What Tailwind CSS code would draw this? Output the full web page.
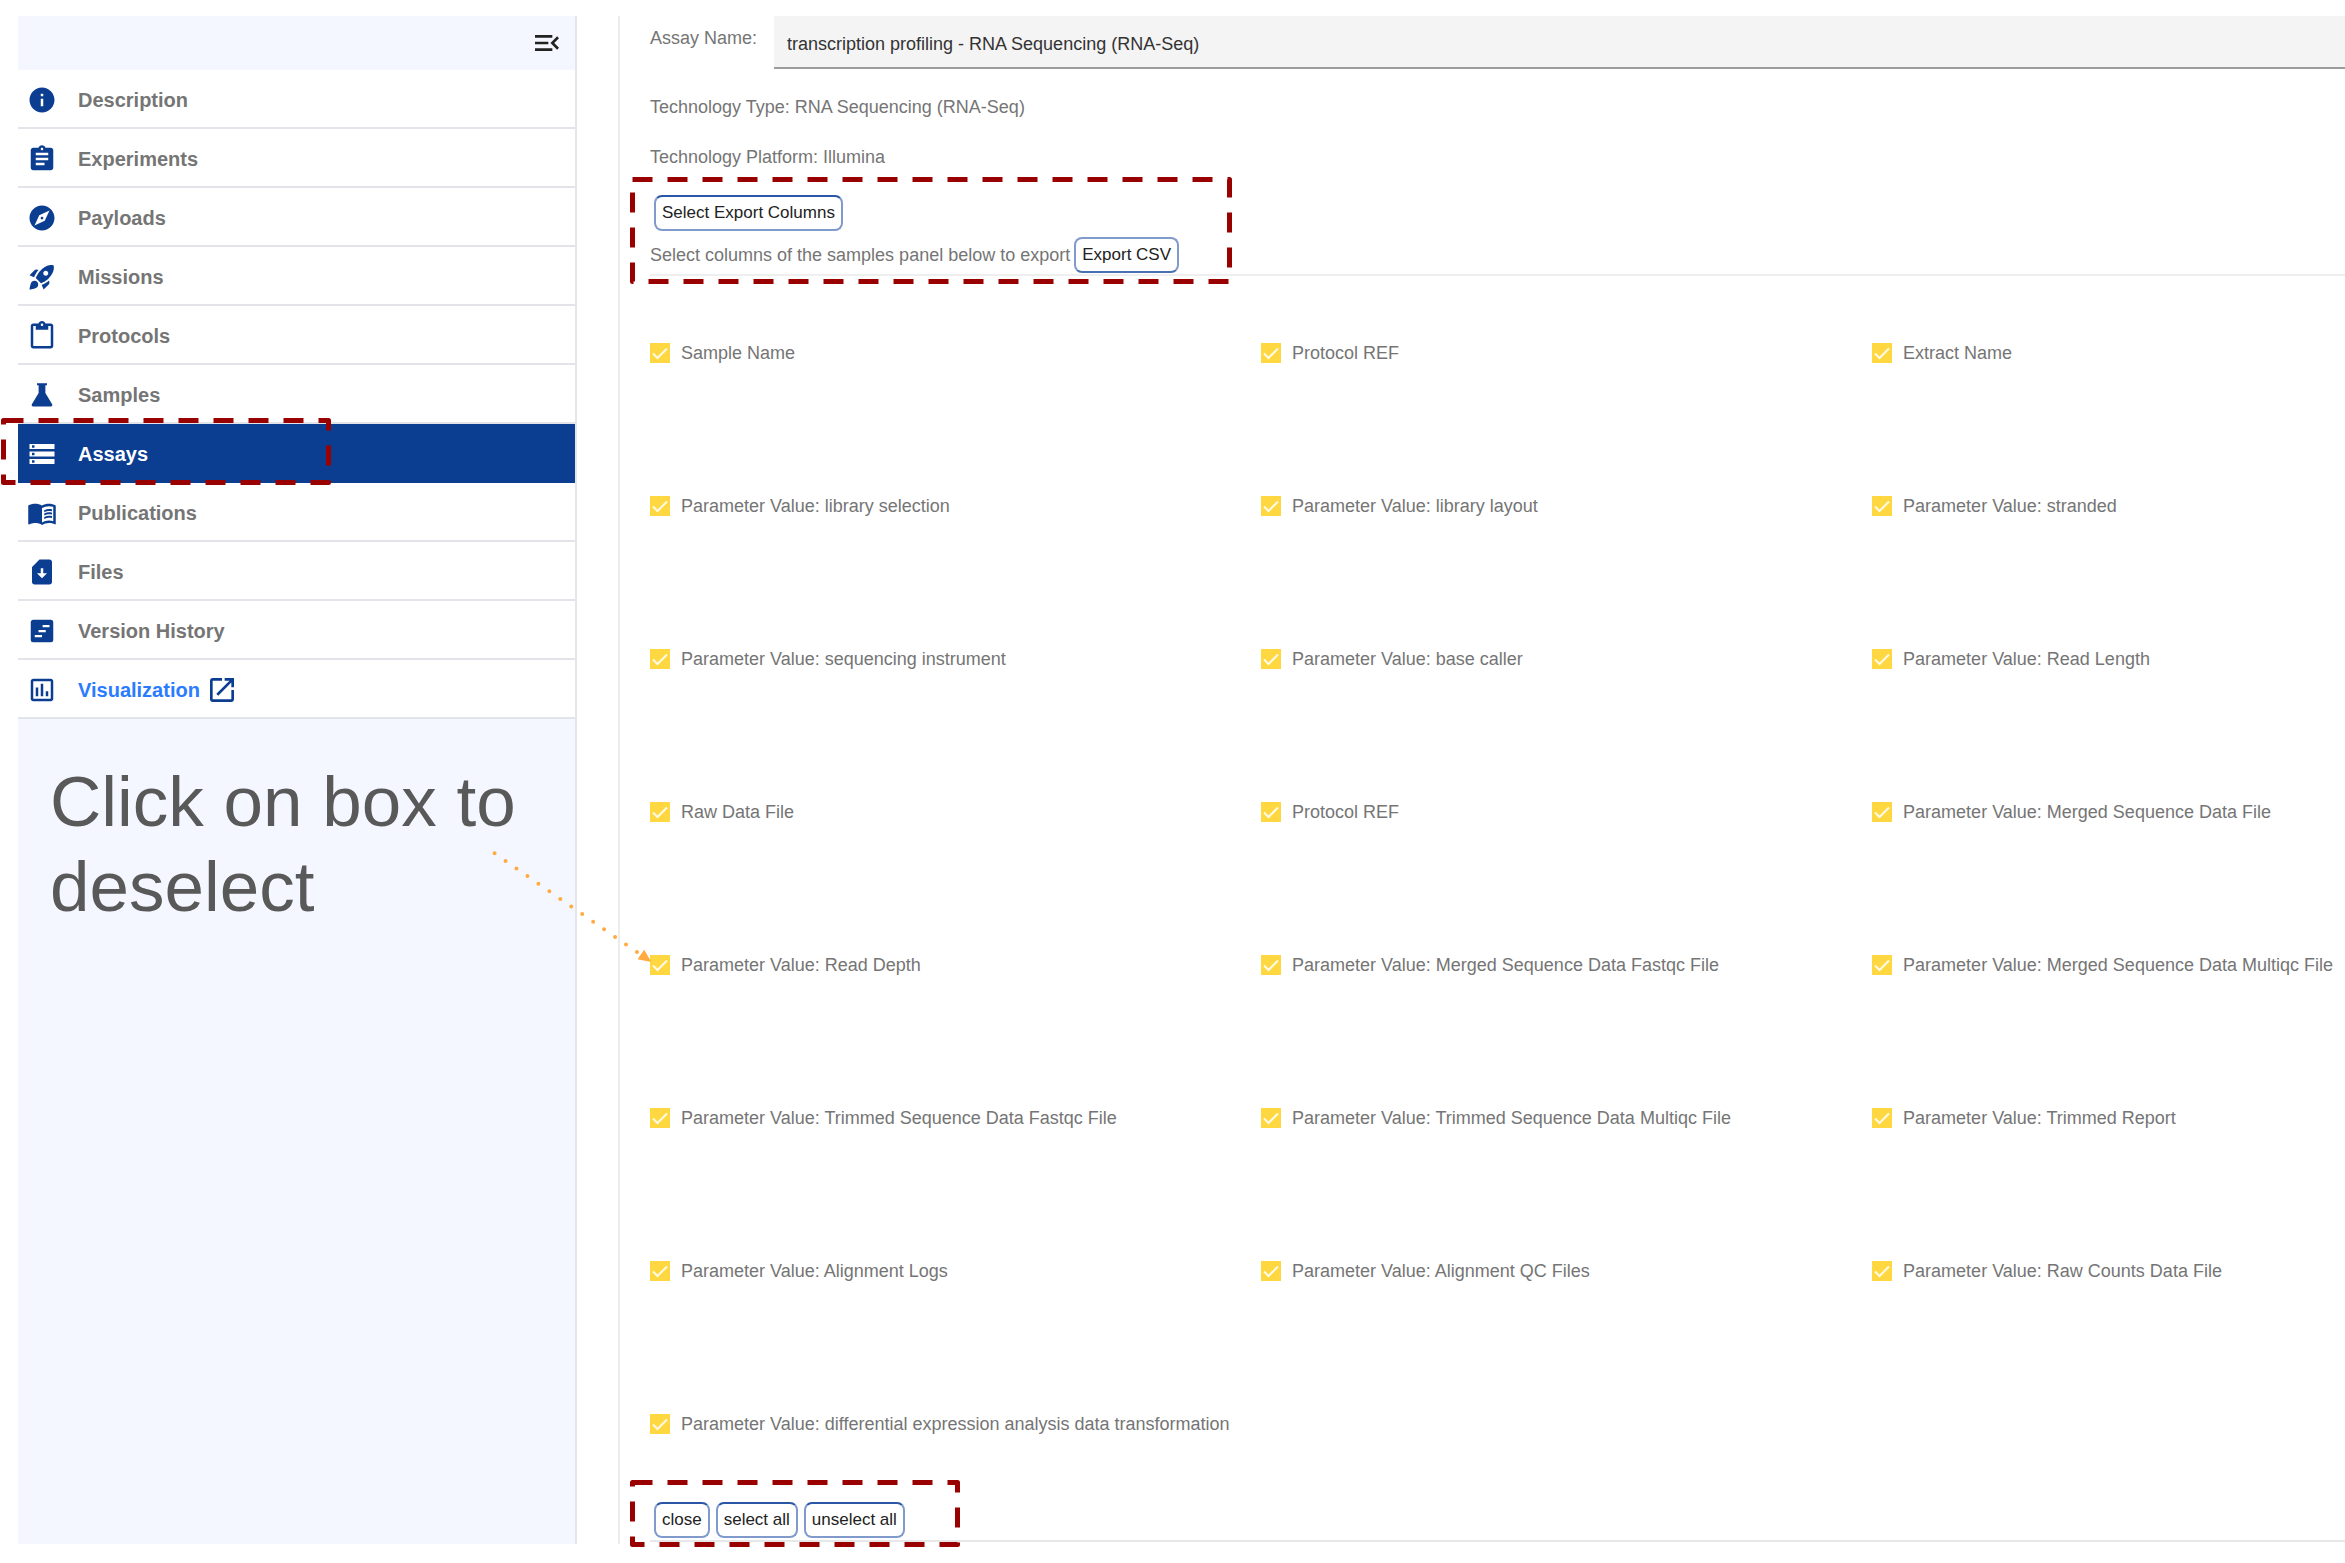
<!DOCTYPE html>
<html lang="en">
<head>
<meta charset="utf-8">
<meta name="viewport" content="width=device-width, initial-scale=1">
<title>Assays - Export Columns</title>
<script src="https://cdn.jsdelivr.net/npm/@tailwindcss/browser@4"></script>
</head>
<body class="bg-white font-['Liberation_Sans',Arial,sans-serif] text-[#757575]">
<svg class="hidden" aria-hidden="true">
  <symbol id="tick" viewBox="0 0 20 20"><path d="M3 10.500 7.500 15 17 5.500" fill="none" stroke="#fffbe6" stroke-width="2"/></symbol>
</svg>
<div class="relative flex min-h-screen overflow-hidden pt-4 pb-[19px] pl-[18px]">

  <!-- Study navigation -->
  <aside class="flex w-[559px] shrink-0 flex-col border-r-2 border-[#e4e6ec] bg-[#f4f7ff]">
    <div class="flex h-[54px] items-center justify-end pr-[12px]">
      <button type="button" aria-label="Collapse menu" class="text-[#222]">
        <svg class="size-8" viewBox="0 0 24 24" fill="currentColor"><path d="M3 18h13v-2H3v2zm0-5h10v-2H3v2zm0-7v2h13V6H3zm18 9.590L17.420 12 21 8.410 19.590 7l-5 5 5 5L21 15.590z"/></svg>
      </button>
    </div>
    <nav class="flex flex-col text-xl font-bold [&>a]:flex [&>a]:h-[59px] [&>a]:items-center [&>a]:gap-[21px] [&>a]:border-b-2 [&>a]:border-[#e2e4ea] [&>a]:bg-white [&>a]:pt-0.5 [&>a]:pl-[9px] [&_svg]:size-[30px] [&_svg]:fill-[#0b3d91]">
      <a href="#description"><svg viewBox="0 0 24 24"><path d="M12 2C6.480 2 2 6.480 2 12s4.480 10 10 10 10-4.480 10-10S17.520 2 12 2zm1 15h-2v-6h2v6zm0-8h-2V7h2v2z"/></svg>Description</a>
      <a href="#experiments"><svg viewBox="0 0 24 24"><path d="M19 3h-4.180C14.400 1.840 13.300 1 12 1c-1.300 0-2.400.84-2.820 2H5c-1.100 0-2 .9-2 2v14c0 1.100.9 2 2 2h14c1.100 0 2-.9 2-2V5c0-1.100-.9-2-2-2zm-7 0c.55 0 1 .45 1 1s-.45 1-1 1-1-.45-1-1 .45-1 1-1zm2 14H7v-2h7v2zm3-4H7v-2h10v2zm0-4H7V7h10v2z"/></svg>Experiments</a>
      <a href="#payloads"><svg viewBox="0 0 24 24"><path d="M12 10.900c-.61 0-1.100.49-1.100 1.100s.49 1.100 1.100 1.100c.61 0 1.100-.49 1.100-1.100s-.49-1.100-1.100-1.100zM12 2C6.480 2 2 6.480 2 12s4.480 10 10 10 10-4.480 10-10S17.520 2 12 2zm2.190 12.190L6 18l3.810-8.190L18 6l-3.810 8.190z"/></svg>Payloads</a>
      <a href="#missions"><svg viewBox="0 0 24 24"><path d="M9.190 6.350c-2.040 2.290-3.440 5.580-3.570 5.890L2 10.690l4.050-4.050c.47-.47 1.150-.68 1.810-.55l1.330.26zM11.170 17s3.740-1.550 5.890-3.700c5.400-5.400 4.500-9.620 4.210-10.570-.95-.3-5.170-1.190-10.570 4.210C8.550 9.090 7 12.830 7 12.830L11.170 17zm6.480-2.190c-2.290 2.040-5.580 3.440-5.890 3.570L13.310 22l4.050-4.050c.47-.47.68-1.150.55-1.810l-.26-1.330zM9 18c0 .83-.34 1.580-.88 2.120C6.940 21.300 2 22 2 22s.7-4.940 1.880-6.120C4.420 15.340 5.170 15 6 15c1.660 0 3 1.340 3 3zm4-9c0-1.100.9-2 2-2s2 .9 2 2-.9 2-2 2-2-.9-2-2z"/></svg>Missions</a>
      <a href="#protocols"><svg viewBox="0 0 24 24"><path d="M19 2h-4.180C14.400.840 13.300 0 12 0c-1.300 0-2.400.840-2.820 2H5c-1.100 0-2 .9-2 2v16c0 1.100.9 2 2 2h14c1.100 0 2-.9 2-2V4c0-1.100-.9-2-2-2zm-7 0c.55 0 1 .45 1 1s-.45 1-1 1-1-.45-1-1 .45-1 1-1zm7 18H5V4h2v3h10V4h2v16z"/></svg>Protocols</a>
      <a href="#samples"><svg viewBox="0 0 24 24"><path d="M8 2.600h8v1.500h-1.300v6.200L20 19.200c.6 1 .2 2-1 2H5c-1.200 0-1.600-1-1-2l5.300-8.900V4.100H8z"/></svg>Samples</a>
      <a href="#assays" aria-current="page" class="border-[#0b3d91]! bg-[#0b3d91]! text-white"><svg class="fill-white!" viewBox="0 0 24 24"><path d="M2 20h20v-4H2v4zm2-3h2v2H4v-2zM2 4v4h20V4H2zm4 3H4V5h2v2zm-4 7h20v-4H2v4zm2-3h2v2H4v-2z"/></svg>Assays</a>
      <a href="#publications"><svg viewBox="0 0 24 24"><path d="M17.500 4.500c-1.950 0-4.050.4-5.500 1.500-1.450-1.100-3.550-1.500-5.500-1.500S2.450 4.900 1 6v14.650c0 .65.730.45.750.45C3.100 20.450 5.050 20 6.500 20c1.950 0 4.050.4 5.500 1.500 1.350-.85 3.800-1.500 5.500-1.500 1.650 0 3.350.3 4.750 1.050.41.210.75-.19.750-.45V6c-1.490-1.120-3.630-1.500-5.500-1.500zm3.500 14c-1.100-.35-2.300-.5-3.500-.5-1.700 0-4.150.65-5.500 1.500V8c1.350-.85 3.800-1.500 5.500-1.500 1.200 0 2.400.15 3.500.5v11.500z"/><path d="M13.800 9.700c1.900-1 4.100-1.200 6.200-.7v1.500c-2.100-.4-4.400-.2-6.200.8zM13.800 12.400c1.900-1 4.100-1.200 6.200-.7v1.500c-2.100-.4-4.400-.2-6.200.8zM13.800 15.100c1.900-1 4.100-1.200 6.200-.7v1.500c-2.100-.4-4.400-.2-6.200.8z"/></svg>Publications</a>
      <a href="#files"><svg viewBox="0 0 24 24"><path d="M18 2h-8L4 8v12c0 1.100.9 2 2 2h12c1.100 0 2-.9 2-2V4c0-1.100-.9-2-2-2zm-6 15l-4-4h3V9.020L13 9v4h3l-4 4z"/></svg>Files</a>
      <a href="#history"><svg viewBox="0 0 24 24"><path fill-rule="evenodd" d="M5 3h14a2 2 0 0 1 2 2v14a2 2 0 0 1-2 2H5a2 2 0 0 1-2-2V5c0-1.100.9-2 2-2zM12.500 7.200v1.700H18V7.200zM9.200 11.200v1.700H15v-1.700zM6.200 15.200v1.700H12v-1.700z"/></svg>Version History</a>
      <a href="#visualization" class="text-[#2b7bff]"><svg viewBox="0 0 24 24"><path d="M9 17H7v-7h2v7zm4 0h-2V7h2v10zm4 0h-2v-4h2v4zm2 2H5V5h14v14zm0-16H5c-1.100 0-2 .9-2 2v14c0 1.100.9 2 2 2h14c1.100 0 2-.9 2-2V5c0-1.100-.9-2-2-2z"/></svg><span class="flex items-center gap-1.5">Visualization<svg class="size-8!" viewBox="0 0 24 24"><path d="M19 19H5V5h7V3H5c-1.110 0-2 .9-2 2v14c0 1.100.89 2 2 2h14c1.100 0 2-.9 2-2v-7h-2v7zM14 3v2h3.590l-9.830 9.830 1.410 1.410L19 6.410V10h2V3h-7z"/></svg></span></a>
    </nav>
    <p class="mt-10 pl-8 text-[71px] leading-[85px] text-[#595959]">Click on box to<br>deselect</p>
  </aside>

  <!-- Assay panel -->
  <main class="ml-[41px] flex min-w-0 flex-1 flex-col border-l-2 border-[#ececec] pl-[30px] text-lg leading-5">
    <div class="flex h-[53px] items-start">
      <label for="assay" class="w-[124px] shrink-0 pt-3">Assay Name:</label>
      <select id="assay" class="h-full min-w-0 flex-1 appearance-none rounded-none border-b-2 border-[#9c9c9c] bg-[#f4f4f4] pt-1 pl-[13px] text-[#333] outline-none">
        <option>transcription profiling - RNA Sequencing (RNA-Seq)</option>
      </select>
    </div>
    <p class="mt-7">Technology Type: RNA Sequencing (RNA-Seq)</p>
    <p class="mt-[30px]">Technology Platform: Illumina</p>
    <div class="mt-7 flex pl-1">
      <button type="button" class="h-9 rounded-lg border-2 border-[#7f9acb] border-t-[#2a56a5] bg-white px-1.5 text-[17px] text-[#222]">Select Export Columns</button>
    </div>
    <div class="mt-1.5 flex h-[39px] items-start gap-1 border-b-2 border-[#efefef]">
      <span class="pt-2">Select columns of the samples panel below to export</span>
      <button type="button" class="h-9 rounded-lg border-2 border-[#7f9acb] border-b-[#4a70b4] bg-white px-1.5 text-[17px] text-[#222]">Export CSV</button>
    </div>

    <div class="grid auto-rows-[153px] grid-cols-[721fr_721fr_558fr] [&_input]:size-5 [&_input]:appearance-none [&_input]:bg-[#ffd740] [&_input]:[grid-area:1/1] [&_label]:flex [&_label]:items-center [&_label]:gap-[11px] [&_label]:whitespace-nowrap [&_label>span]:grid [&_svg]:pointer-events-none [&_svg]:size-5 [&_svg]:[grid-area:1/1]">
      <label><span><input type="checkbox" checked><svg><use href="#tick"/></svg></span>Sample Name</label>
      <label><span><input type="checkbox" checked><svg><use href="#tick"/></svg></span>Protocol REF</label>
      <label><span><input type="checkbox" checked><svg><use href="#tick"/></svg></span>Extract Name</label>
      <label><span><input type="checkbox" checked><svg><use href="#tick"/></svg></span>Parameter Value: library selection</label>
      <label><span><input type="checkbox" checked><svg><use href="#tick"/></svg></span>Parameter Value: library layout</label>
      <label><span><input type="checkbox" checked><svg><use href="#tick"/></svg></span>Parameter Value: stranded</label>
      <label><span><input type="checkbox" checked><svg><use href="#tick"/></svg></span>Parameter Value: sequencing instrument</label>
      <label><span><input type="checkbox" checked><svg><use href="#tick"/></svg></span>Parameter Value: base caller</label>
      <label><span><input type="checkbox" checked><svg><use href="#tick"/></svg></span>Parameter Value: Read Length</label>
      <label><span><input type="checkbox" checked><svg><use href="#tick"/></svg></span>Raw Data File</label>
      <label><span><input type="checkbox" checked><svg><use href="#tick"/></svg></span>Protocol REF</label>
      <label><span><input type="checkbox" checked><svg><use href="#tick"/></svg></span>Parameter Value: Merged Sequence Data File</label>
      <label><span><input type="checkbox" checked><svg><use href="#tick"/></svg></span>Parameter Value: Read Depth</label>
      <label><span><input type="checkbox" checked><svg><use href="#tick"/></svg></span>Parameter Value: Merged Sequence Data Fastqc File</label>
      <label><span><input type="checkbox" checked><svg><use href="#tick"/></svg></span>Parameter Value: Merged Sequence Data Multiqc File</label>
      <label><span><input type="checkbox" checked><svg><use href="#tick"/></svg></span>Parameter Value: Trimmed Sequence Data Fastqc File</label>
      <label><span><input type="checkbox" checked><svg><use href="#tick"/></svg></span>Parameter Value: Trimmed Sequence Data Multiqc File</label>
      <label><span><input type="checkbox" checked><svg><use href="#tick"/></svg></span>Parameter Value: Trimmed Report</label>
      <label><span><input type="checkbox" checked><svg><use href="#tick"/></svg></span>Parameter Value: Alignment Logs</label>
      <label><span><input type="checkbox" checked><svg><use href="#tick"/></svg></span>Parameter Value: Alignment QC Files</label>
      <label><span><input type="checkbox" checked><svg><use href="#tick"/></svg></span>Parameter Value: Raw Counts Data File</label>
      <label><span><input type="checkbox" checked><svg><use href="#tick"/></svg></span>Parameter Value: differential expression analysis data transformation</label>
    </div>

    <div class="flex gap-1.5 border-b-2 border-[#e8e8e8] pt-0.5 pb-0.5 pl-1">
      <button type="button" class="h-9 rounded-lg border-2 border-[#7f9acb] border-t-[#2a56a5] bg-white px-1.5 text-[17px] text-[#222]">close</button>
      <button type="button" class="h-9 rounded-lg border-2 border-[#7f9acb] border-t-[#2a56a5] bg-white px-1.5 text-[17px] text-[#222]">select all</button>
      <button type="button" class="h-9 rounded-lg border-2 border-[#7f9acb] border-t-[#2a56a5] bg-white px-1.5 text-[17px] text-[#222]">unselect all</button>
    </div>
  </main>

  <!-- Callouts drawn over the page -->
  <svg class="pointer-events-none absolute top-[418px] left-px h-[67px] w-[330px]" fill="none" stroke="#990000" stroke-width="5" stroke-linejoin="round" stroke-dasharray="20 15"><path d="M2.500 2.500h325v62h-325z"/></svg>
  <svg class="pointer-events-none absolute top-[177px] left-[630px] h-[107px] w-[602px]" fill="none" stroke="#990000" stroke-width="5" stroke-linejoin="round" stroke-dasharray="20 15"><path d="M2.500 2.500h597v102h-597z"/></svg>
  <svg class="pointer-events-none absolute top-[1480px] left-[630px] h-[67px] w-[330px]" fill="none" stroke="#990000" stroke-width="5" stroke-linejoin="round" stroke-dasharray="20 15"><path d="M2.500 2.500h325v62h-325z"/></svg>
  <svg class="pointer-events-none absolute top-[850px] left-[490px] h-[116px] w-[164px]"><path d="M4.600 3.300 147.500 102.500" fill="none" stroke="#ffab40" stroke-width="4" stroke-linecap="round" stroke-dasharray="0 13.330"/><path d="M154.200 99.700 147.500 109.300 161.300 112z" fill="#ffab40"/></svg>
</div>
</body>
</html>
